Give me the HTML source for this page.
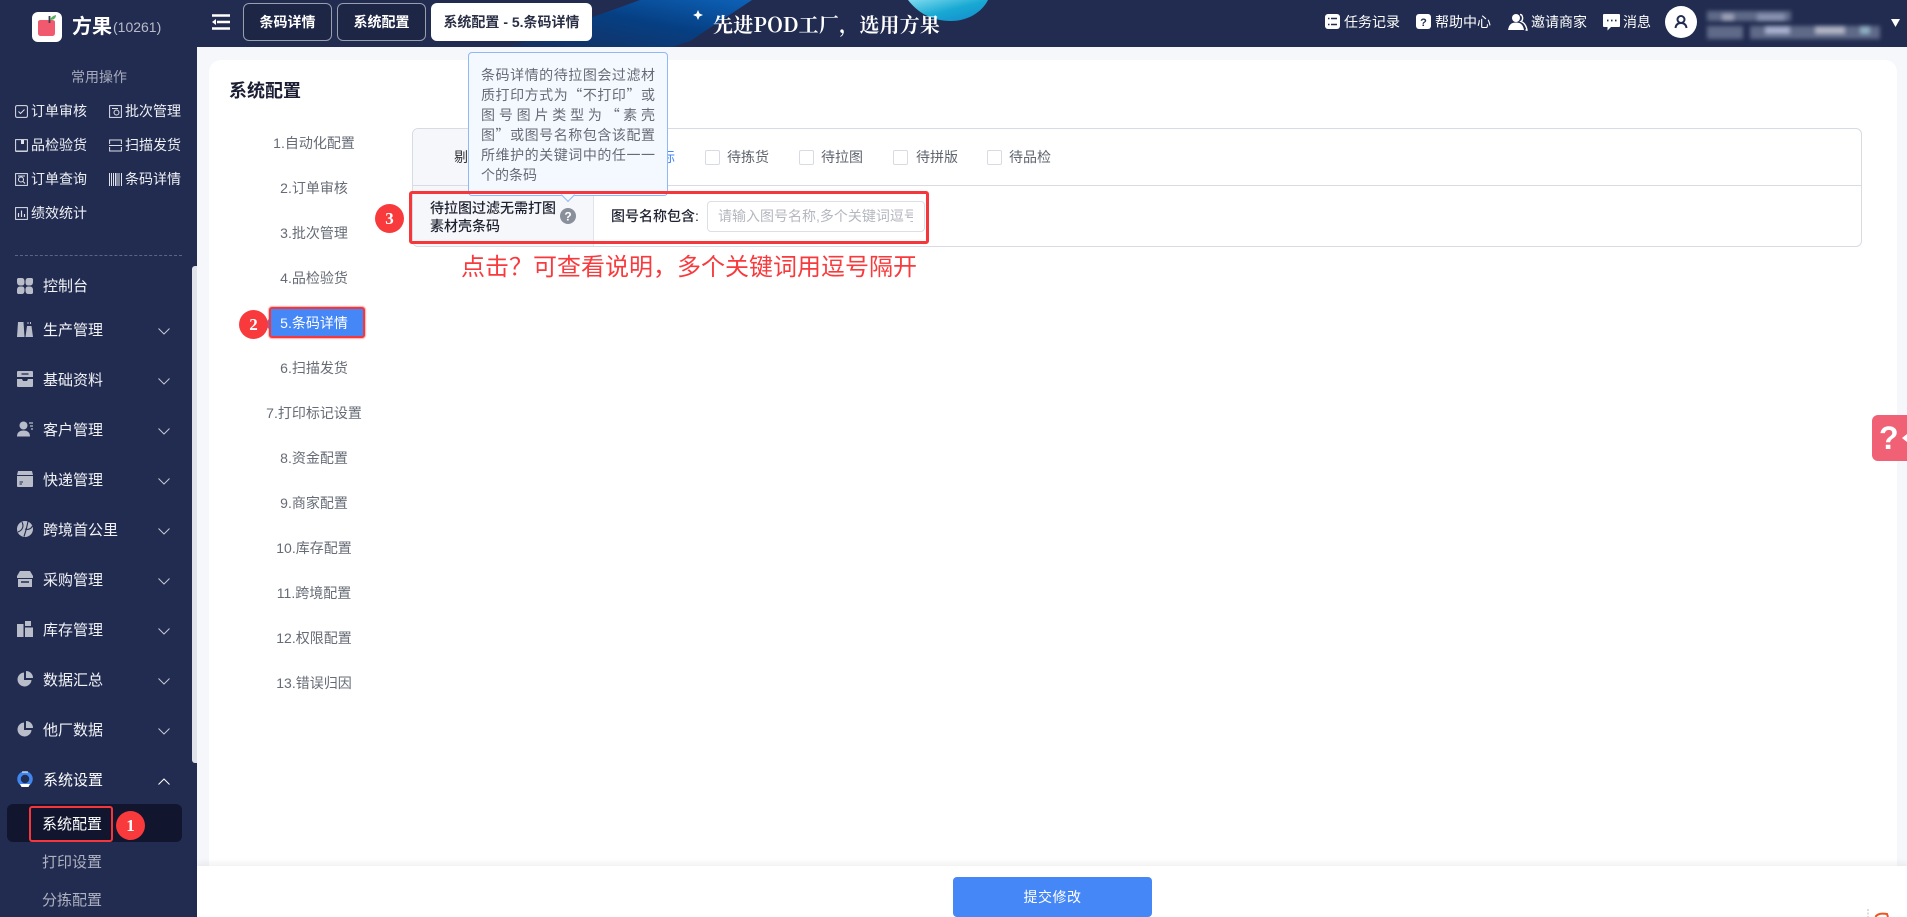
<!DOCTYPE html>
<html lang="zh-CN">
<head>
<meta charset="utf-8">
<title>系统配置</title>
<style>
html,body{margin:0;padding:0;width:1907px;height:917px;overflow:hidden;background:#f5f7fb}
body{font-family:"Liberation Sans","Noto Sans CJK SC",sans-serif;font-size:14px;position:relative}
div,span,svg{position:absolute}
.t{white-space:nowrap;line-height:20px;height:20px}
.w{color:#fff}
.q{color:#eef0f5;font-size:14px}
.m{color:#f2f3f7;font-size:15px;left:43px;margin-top:1px}
.mi{left:214px;width:200px;text-align:center;color:#666b75}
.tab{top:3px;height:36px;line-height:36px;border:1px solid #9a9fae;border-radius:6px;background:#1e2646;color:#fff;font-weight:700;text-align:center;font-size:14px}
.tl{left:481px;width:174px;text-align:justify;text-align-last:justify;color:#666b75;line-height:20px;height:20px;white-space:nowrap;font-family:"Noto Sans CJK SC","Liberation Sans",sans-serif}
.badge{width:29px;height:29px;border-radius:50%;background:#f93a3d;color:#fff;font:700 17px/29px "Liberation Serif",serif;text-align:center}
.cb{width:13px;height:13px;border:1px solid #d8dbe3;border-radius:2px;background:#fff;top:150px}
.cl{color:#5f646e;top:147px}
.chev{left:158px;width:12px;height:7px}
.ic{left:17px;width:16px;height:16px}
.qi{width:13px;height:13px}
.b{background:#5f6a88;filter:blur(2px)}
</style>
</head>
<body>
<!-- content -->
<div style="left:209px;top:60px;width:1688px;height:820px;background:#fff;border-radius:12px 12px 0 0"></div>

<!-- header -->
<div style="left:0;top:0;width:1907px;height:47px;background:#222c50"></div>
<svg style="left:500px;top:0" width="500" height="47" viewBox="500 0 500 47">
<defs><linearGradient id="g1" x1="0" y1="1" x2="1" y2="0"><stop offset="0" stop-color="#16305f"/><stop offset=".55" stop-color="#063f83"/><stop offset="1" stop-color="#0d62b8"/></linearGradient>
<linearGradient id="g2" x1="0" y1="0" x2="1" y2="1"><stop offset="0" stop-color="#7fdcf0"/><stop offset=".5" stop-color="#19a9d3"/><stop offset="1" stop-color="#1288cc"/></linearGradient></defs>
<polygon points="510,47 640,0 752,0 690,41 672,47" fill="url(#g1)"/>
<path d="M908 0C918 13 932 21 951 21C968 21 982 12 988 0Z" fill="url(#g2)"/>
<path d="M698 10L699.500 13.500L703 15L699.500 16.500L698 20L696.500 16.500L693 15L696.500 13.500Z" fill="#fff"/>
</svg>
<div class="t" style="left:713px;top:10px;height:28px;color:#fff;font:700 20px/28px 'Noto Serif CJK SC','Liberation Serif',serif;letter-spacing:.2px">先进POD工厂，选用方果</div>

<!-- logo -->
<div style="left:32px;top:12px;width:30px;height:30px;background:#fff;border-radius:6px"></div>
<svg style="left:32px;top:12px" width="30" height="30" viewBox="0 0 30 30"><path d="M6 10Q6 8 9 8H20Q23 8 23 10V21Q23 24 20 24H9Q6 24 6 21Z" fill="#f0596e"/><path d="M17.500 11V4" stroke="#3a3f4f" stroke-width="1.800"/><path d="M18 8C19 5 21 4 24 3C24 6 22 8 18 8Z" fill="#4db35a"/></svg>
<div class="t w" style="left:72px;top:13px;height:28px;line-height:28px;font-size:20px;font-weight:700">方果</div>
<div class="t" style="left:113px;top:17px;color:#b8bcc9;font-size:14px">(10261)</div>

<!-- hamburger -->
<svg style="left:212px;top:14px" width="18" height="16" viewBox="0 0 18 16"><path d="M0 .3H18V2.800H0ZM5 6.800H18V9.200H5ZM0 13.200H18V15.700H0Z" fill="#fff"/><path d="M4 5V11L0 8Z" fill="#fff"/></svg>

<!-- tabs -->
<div class="tab" style="left:243px;width:87px">条码详情</div>
<div class="tab" style="left:337px;width:87px">系统配置</div>
<div class="tab" style="left:431px;width:161px;height:38px;line-height:38px;border:0;background:#fff;color:#2a2f45">系统配置 - 5.条码详情</div>

<!-- header right -->
<svg style="left:1325px;top:14px" width="15" height="15" viewBox="0 0 15 15"><rect width="15" height="15" rx="3" fill="#fff"/><path d="M6 4.500H12M6 10.500H12M3 4.500H4.500M3 10.500H4.500" stroke="#222c50" stroke-width="1.400"/></svg>
<div class="t w" style="left:1344px;top:12px">任务记录</div>
<svg style="left:1416px;top:14px" width="15" height="15" viewBox="0 0 15 15"><rect width="15" height="15" rx="3" fill="#fff"/><text x="7.500" y="12" text-anchor="middle" font-family="Liberation Sans" font-weight="700" font-size="11" fill="#222c50">?</text></svg>
<div class="t w" style="left:1435px;top:12px">帮助中心</div>
<svg style="left:1508px;top:13px" width="20" height="18" viewBox="0 0 20 18"><circle cx="8" cy="5" r="4" fill="#fff"/><path d="M0 17C1 11 4 9.500 8 9.500C12 9.500 15 11 16 17Z" fill="#fff"/><path d="M12 1.500C15 1.500 15.500 7 13 8.500C16 9.500 18 12 19 17H17.500" fill="none" stroke="#fff" stroke-width="1.400"/></svg>
<div class="t w" style="left:1531px;top:12px">邀请商家</div>
<svg style="left:1603px;top:14px" width="17" height="17" viewBox="0 0 17 17"><path d="M1 0H16A1 1 0 0 1 17 1V12A1 1 0 0 1 16 13H8L4.500 16.500V13H1A1 1 0 0 1 0 12V1A1 1 0 0 1 1 0Z" fill="#fff"/><path d="M4 6.500H5.500M8 6.500H9.500M12 6.500H13.500" stroke="#222c50" stroke-width="1.800"/></svg>
<div class="t w" style="left:1623px;top:12px">消息</div>
<div style="left:1665px;top:6px;width:32px;height:32px;border-radius:50%;background:#fff"></div>
<svg style="left:1673px;top:14px" width="16" height="16" viewBox="0 0 16 16"><circle cx="8" cy="5.500" r="3.500" fill="none" stroke="#222c50" stroke-width="2"/><path d="M2.500 14C3 10.500 5 9 8 9C11 9 13 10.500 13.500 14" fill="none" stroke="#222c50" stroke-width="2"/></svg>
<!-- blurred account -->
<div class="b" style="left:1707px;top:11px;width:84px;height:10px"></div>
<div class="b" style="left:1722px;top:14px;width:12px;height:6px;background:#a3a6b8"></div>
<div class="b" style="left:1757px;top:14px;width:28px;height:6px;background:#8d96b3"></div>
<div class="b" style="left:1707px;top:26px;width:36px;height:13px"></div>
<div class="b" style="left:1750px;top:26px;width:130px;height:13px"></div>
<div class="b" style="left:1765px;top:27px;width:25px;height:7px;background:#a9b2d0"></div>
<div class="b" style="left:1815px;top:27px;width:30px;height:7px;background:#b4b6c4"></div>
<div class="b" style="left:1860px;top:27px;width:10px;height:7px;background:#8fb2c6"></div>
<svg style="left:1891px;top:19px" width="9" height="8" viewBox="0 0 9 8"><path d="M0 0H9L4.500 8Z" fill="#fff"/></svg>

<!-- sidebar -->
<div style="left:0;top:47px;width:197px;height:870px;background:#222c50"></div>
<div style="left:192px;top:266px;width:5px;height:497px;background:#e1e3ea;border-radius:3px 0 0 3px"></div>
<div class="t" style="left:71px;top:67px;color:#a7acbd">常用操作</div>

<svg class="qi" style="left:15px;top:105px" viewBox="0 0 13 13"><rect x=".6" y=".6" width="11.800" height="11.800" rx="1.500" fill="none" stroke="#dfe2ea" stroke-width="1"/><path d="M3.500 6.500L5.500 8.500L9.500 4.500" fill="none" stroke="#dfe2ea"/></svg>
<div class="t q" style="left:31px;top:101px">订单审核</div>
<svg class="qi" style="left:109px;top:105px" viewBox="0 0 13 13"><rect x=".6" y=".6" width="11.800" height="11.800" fill="none" stroke="#dfe2ea"/><circle cx="7.500" cy="7.500" r="2.500" fill="none" stroke="#dfe2ea"/><path d="M3 3.500H9" stroke="#dfe2ea"/></svg>
<div class="t q" style="left:125px;top:101px">批次管理</div>
<svg class="qi" style="left:15px;top:139px" viewBox="0 0 13 13"><path d="M.6 12V.6H12.400V12Z" fill="none" stroke="#dfe2ea"/><path d="M6 .6V5H9V.6" fill="#dfe2ea"/><path d="M.6 12.400H12.400" stroke="#dfe2ea"/></svg>
<div class="t q" style="left:31px;top:135px">品检验货</div>
<svg class="qi" style="left:109px;top:139px" viewBox="0 0 13 13"><path d="M.6 5V1H12.400V5M.6 8V12H12.400V8M0 6.500H13" fill="none" stroke="#dfe2ea"/></svg>
<div class="t q" style="left:125px;top:135px">扫描发货</div>
<svg class="qi" style="left:15px;top:173px" viewBox="0 0 13 13"><rect x=".6" y=".6" width="11.800" height="11.800" fill="none" stroke="#dfe2ea"/><circle cx="6" cy="6.500" r="2.500" fill="none" stroke="#dfe2ea"/><path d="M8 8.500L10 10.500M3 3H10" stroke="#dfe2ea"/></svg>
<div class="t q" style="left:31px;top:169px">订单查询</div>
<svg class="qi" style="left:109px;top:173px" viewBox="0 0 13 13"><path d="M.5 0V13M2.500 0V13M4.500 0V13M6.500 0V13M8 0V13M10 0V13M12.500 0V13" stroke="#dfe2ea" stroke-width="1"/></svg>
<div class="t q" style="left:125px;top:169px">条码详情</div>
<svg class="qi" style="left:15px;top:207px" viewBox="0 0 13 13"><rect x=".6" y=".6" width="11.800" height="11.800" fill="none" stroke="#dfe2ea"/><path d="M3.500 10V6M6.500 10V3.500M9.500 10V7" stroke="#dfe2ea" stroke-width="1.200"/></svg>
<div class="t q" style="left:31px;top:203px">绩效统计</div>

<div style="left:15px;top:255px;width:167px;border-top:1px dashed #5b6482"></div>

<svg class="ic" style="top:278px" viewBox="0 0 16 16" fill="#b9bdc9"><path d="M1 0H5C7 0 7.500 2 7.500 4C7.500 6 7 7.500 5 7.500H3C1 7.500 0 6 0 4V1Z"/><path d="M15 0H11C9 0 8.500 2 8.500 4C8.500 6 9 7.500 11 7.500H13C15 7.500 16 6 16 4V1Z"/><path d="M1 16H5C7 16 7.500 14 7.500 12C7.500 10 7 8.500 5 8.500H3C1 8.500 0 10 0 12V15Z"/><path d="M15 16H11C9 16 8.500 14 8.500 12C8.500 10 9 8.500 11 8.500H13C15 8.500 16 10 16 12V15Z"/></svg>
<div class="t m" style="top:276px">控制台</div>

<svg class="ic" style="top:321px" viewBox="0 0 16 16" fill="#b9bdc9"><path d="M1 1H6.500L7.500 16H0Z"/><path d="M10 5H14.500L16 16H8.500Z"/><path d="M11 1V3M13.500 1V3" stroke="#b9bdc9"/></svg>
<div class="t m" style="top:320px">生产管理</div>
<svg class="chev" style="top:328px" viewBox="0 0 12 7"><path d="M.5 .5L6 6L11.500 .5" fill="none" stroke="#c6c9d4"/></svg>

<svg class="ic" style="top:371px" viewBox="0 0 16 16" fill="#b9bdc9"><path d="M0 1A1 1 0 0 1 1 0H15A1 1 0 0 1 16 1V6H0Z"/><path d="M0 8H5L6 10H10L11 8H16V15A1 1 0 0 1 15 16H1A1 1 0 0 1 0 15Z"/><path d="M4.500 3H11.500" stroke="#222c50" stroke-width="1.300"/></svg>
<div class="t m" style="top:370px">基础资料</div>
<svg class="chev" style="top:378px" viewBox="0 0 12 7"><path d="M.5 .5L6 6L11.500 .5" fill="none" stroke="#c6c9d4"/></svg>

<svg class="ic" style="top:421px" viewBox="0 0 16 16" fill="#b9bdc9"><circle cx="6.500" cy="4.500" r="4"/><path d="M0 15.500C0 11 3 9.500 6.500 9.500C10 9.500 13 11 13 15.500Z"/><path d="M12 2H16M13 5H16M14 8H16" stroke="#b9bdc9" stroke-width="1.300"/></svg>
<div class="t m" style="top:420px">客户管理</div>
<svg class="chev" style="top:428px" viewBox="0 0 12 7"><path d="M.5 .5L6 6L11.500 .5" fill="none" stroke="#c6c9d4"/></svg>

<svg class="ic" style="top:471px" viewBox="0 0 16 16" fill="#b9bdc9"><path d="M1 0H15L16 4H0Z"/><path d="M0 5H16V15A1 1 0 0 1 15 16H1A1 1 0 0 1 0 15Z"/><path d="M2.500 11H6M2.500 13H5" stroke="#222c50"/></svg>
<div class="t m" style="top:470px">快递管理</div>
<svg class="chev" style="top:478px" viewBox="0 0 12 7"><path d="M.5 .5L6 6L11.500 .5" fill="none" stroke="#c6c9d4"/></svg>

<svg class="ic" style="top:521px" viewBox="0 0 16 16"><circle cx="8" cy="8" r="8" fill="#b9bdc9"/><path d="M5 1C7 5 6 9 1 11M11 .5C10 6 9 10 7 15.500M8 8C11 9 14 8 15.500 5" fill="none" stroke="#222c50" stroke-width="1.100"/></svg>
<div class="t m" style="top:520px">跨境首公里</div>
<svg class="chev" style="top:528px" viewBox="0 0 12 7"><path d="M.5 .5L6 6L11.500 .5" fill="none" stroke="#c6c9d4"/></svg>

<svg class="ic" style="top:571px" viewBox="0 0 16 16" fill="#b9bdc9"><path d="M3 0H13L16 5V7H0V5Z"/><path d="M1 8H15V16H1Z"/><path d="M4 11H12" stroke="#222c50" stroke-width="1.500"/></svg>
<div class="t m" style="top:570px">采购管理</div>
<svg class="chev" style="top:578px" viewBox="0 0 12 7"><path d="M.5 .5L6 6L11.500 .5" fill="none" stroke="#c6c9d4"/></svg>

<svg class="ic" style="top:621px" viewBox="0 0 16 16" fill="#b9bdc9"><rect x="0" y="3" width="6.500" height="13"/><rect x="8" y="0" width="6" height="5"/><rect x="8" y="6.500" width="8" height="9.500"/></svg>
<div class="t m" style="top:620px">库存管理</div>
<svg class="chev" style="top:628px" viewBox="0 0 12 7"><path d="M.5 .5L6 6L11.500 .5" fill="none" stroke="#c6c9d4"/></svg>

<svg class="ic" style="top:671px" viewBox="0 0 16 16" fill="#b9bdc9"><path d="M7 1.500A7 7 0 1 0 14.500 9H7Z"/><path d="M9 0A7 7 0 0 1 16 7H9Z"/></svg>
<div class="t m" style="top:670px">数据汇总</div>
<svg class="chev" style="top:678px" viewBox="0 0 12 7"><path d="M.5 .5L6 6L11.500 .5" fill="none" stroke="#c6c9d4"/></svg>

<svg class="ic" style="top:721px" viewBox="0 0 16 16" fill="#b9bdc9"><path d="M7 1.500A7 7 0 1 0 14.500 9H7Z"/><path d="M9 0A7 7 0 0 1 16 7H9Z"/></svg>
<div class="t m" style="top:720px">他厂数据</div>
<svg class="chev" style="top:728px" viewBox="0 0 12 7"><path d="M.5 .5L6 6L11.500 .5" fill="none" stroke="#c6c9d4"/></svg>

<svg class="ic" style="top:771px" viewBox="0 0 16 16"><circle cx="8" cy="8" r="6" fill="none" stroke="#3f86ef" stroke-width="3.500"/><path d="M3 13H13L11.500 16H4.500Z" fill="#fff"/><path d="M5 1H11" stroke="#fff" stroke-width="1"/></svg>
<div class="t w m" style="top:770px;color:#fff">系统设置</div>
<svg class="chev" style="top:778px" viewBox="0 0 12 7"><path d="M.5 6.500L6 1L11.500 6.500" fill="none" stroke="#fff"/></svg>

<div style="left:7px;top:804px;width:175px;height:38px;background:#11162e;border-radius:6px"></div>
<div class="t w" style="left:42px;top:815px;font-size:15px">系统配置</div>
<div style="left:29px;top:806px;width:80px;height:32px;border:2.500px solid #f5363a;border-radius:3px"></div>
<div class="badge" style="left:116px;top:811px">1</div>
<div class="t" style="left:42px;top:853px;font-size:15px;color:#aeb2c1">打印设置</div>
<div class="t" style="left:42px;top:891px;font-size:15px;color:#aeb2c1">分拣配置</div>

<!-- card content -->
<div class="t" style="left:229px;top:81px;font-size:18px;font-weight:700;color:#1b1d33">系统配置</div>
<div class="t mi" style="top:133px">1.自动化配置</div>
<div class="t mi" style="top:178px">2.订单审核</div>
<div class="t mi" style="top:223px">3.批次管理</div>
<div class="t mi" style="top:268px">4.品检验货</div>
<div style="left:264px;top:316px;border:8px solid transparent;border-right-color:#4687f7;border-left:0"></div>
<div style="left:269px;top:307px;width:92px;height:27px;background:#4687f7;border:2.500px solid #f5363a;border-radius:3px;box-shadow:0 0 1px 1px rgba(245,54,58,.4)"></div>
<div class="t mi w" style="top:313px;color:#fff">5.条码详情</div>
<div class="badge" style="left:239px;top:310px">2</div>
<div class="t mi" style="top:358px">6.扫描发货</div>
<div class="t mi" style="top:403px">7.打印标记设置</div>
<div class="t mi" style="top:448px">8.资金配置</div>
<div class="t mi" style="top:493px">9.商家配置</div>
<div class="t mi" style="top:538px">10.库存配置</div>
<div class="t mi" style="top:583px">11.跨境配置</div>
<div class="t mi" style="top:628px">12.权限配置</div>
<div class="t mi" style="top:673px">13.错误归因</div>

<!-- table -->
<div style="left:412px;top:128px;width:1448px;height:117px;border:1px solid #d8dbe3;border-radius:6px;background:#fff;overflow:hidden">
  <div style="left:0;top:0;width:180px;height:118px;background:#f6f7fb;border-right:1px solid #e1e3ea"></div>
  <div style="left:0;top:56px;width:1449px;border-top:1px solid #d8dbe3"></div>
</div>
<div class="t" style="left:454px;top:147px;color:#303133">剔除</div>
<div class="t" style="left:661px;top:147px;color:#4687f7">标</div>
<div class="cb" style="left:705px"></div><div class="t cl" style="left:727px">待拣货</div>
<div class="cb" style="left:799px"></div><div class="t cl" style="left:821px">待拉图</div>
<div class="cb" style="left:893px"></div><div class="t cl" style="left:916px">待拼版</div>
<div class="cb" style="left:987px"></div><div class="t cl" style="left:1009px">待品检</div>

<div class="t" style="left:430px;top:198px;color:#1f2230;font-weight:500">待拉图过滤无需打图</div>
<div class="t" style="left:430px;top:216px;color:#1f2230;font-weight:500">素材壳条码</div>
<div class="t" style="left:611px;top:206px;color:#1f2230;font-weight:500">图号名称包含:</div>
<div style="left:707px;top:201px;width:216px;height:29px;border:1px solid #dcdfe6;border-radius:4px;background:#fff"></div>
<div class="t" style="left:718px;top:206px;width:195px;overflow:hidden;color:#b4b7bf">请输入图号名称,多个关键词逗号隔开</div>

<!-- tooltip -->
<div style="left:468px;top:52px;width:198px;height:142px;background:#f4f8ff;border:1px solid #8fb8f8;border-radius:4px"></div>
<div style="left:563px;top:190px;width:9px;height:9px;background:#f4f8ff;border-right:1px solid #8fb8f8;border-bottom:1px solid #8fb8f8;transform:rotate(45deg)"></div>
<div class="tl" style="top:65px">条码详情的待拉图会过滤材</div>
<div class="tl" style="top:85px">质打印方式为“不打印”或</div>
<div class="tl" style="top:105px">图 号 图 片 类 型 为 “ 素 壳</div>
<div class="tl" style="top:125px">图”或图号名称包含该配置</div>
<div class="tl" style="top:145px">所维护的关键词中的任一一</div>
<div class="tl" style="top:165px;text-align-last:left;text-align:left">个的条码</div>

<!-- red box annotation -->
<div style="left:409px;top:191px;width:514px;height:47px;border:3px solid #f5363a;border-radius:3px"></div>
<div class="badge" style="left:375px;top:204px">3</div>
<svg style="left:560px;top:208px" width="16" height="16" viewBox="0 0 16 16"><circle cx="8" cy="8" r="8" fill="#8a8f9c"/><text x="8" y="12.500" text-anchor="middle" font-family="Liberation Sans" font-weight="700" font-size="12" fill="#fff">?</text></svg>
<div class="t" style="left:461px;top:252px;height:32px;line-height:32px;font-size:24px;color:#f93a3d">点击？可查看说明，多个关键词用逗号隔开</div>

<!-- right help widget -->
<div style="left:1897px;top:47px;width:10px;height:819px;background:#f5f7fb"></div>
<div style="left:1872px;top:415px;width:35px;height:46px;background:#f06175;border-radius:6px 0 0 6px"></div>
<div class="t" style="left:1879px;top:420px;height:36px;line-height:36px;color:#fff;font-size:32px;font-weight:700">?</div>
<div style="left:1902px;top:434px;border:4px solid transparent;border-right:5px solid #fff;border-left:0"></div>

<!-- footer -->
<div style="left:197px;top:866px;width:1710px;height:51px;background:#fff;box-shadow:0 -3px 6px rgba(0,0,0,.06)"></div>
<div style="left:953px;top:877px;width:199px;height:40px;background:#4687f7;border-radius:4px;color:#fff;text-align:center;line-height:40px;font-size:14px;letter-spacing:.5px">提交修改</div>
<svg style="left:1866px;top:909px" width="24" height="8" viewBox="0 0 24 8"><path d="M2 0V8" stroke="#bbb" stroke-dasharray="2 1.500"/><path d="M9.500 8C11 5 15 4 21 5L22 8" fill="none" stroke="#f0531c" stroke-width="2"/></svg>
</body>
</html>
